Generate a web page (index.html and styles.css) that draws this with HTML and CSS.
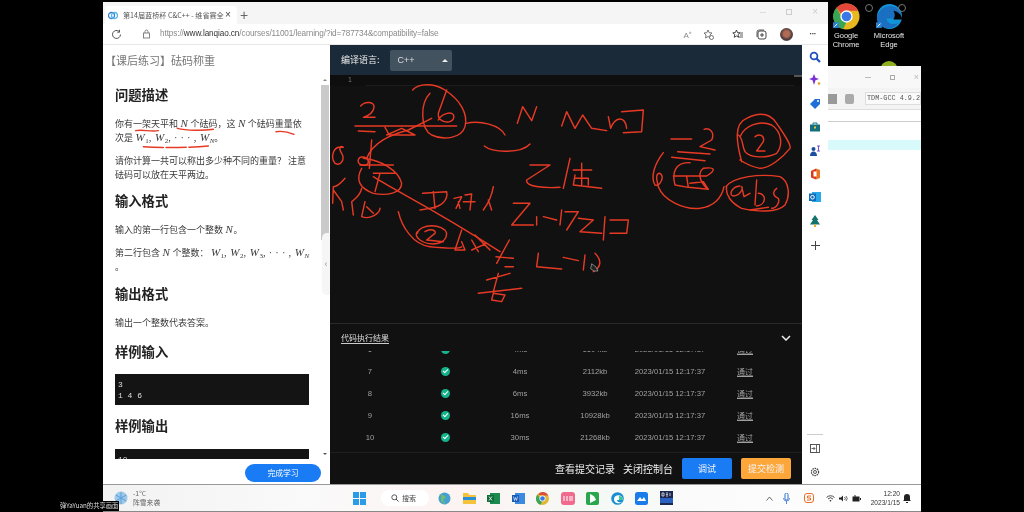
FILE: index.html
```html
<!DOCTYPE html>
<html lang="zh">
<head>
<meta charset="utf-8">
<title>砝码称重</title>
<link rel="stylesheet" href="styles.css">
</head>
<body>
<div class="desktop">
  <div class="desk-icon chrome-desk">
    <svg width="27" height="27" viewBox="0 0 28 28"><circle cx="14" cy="14" r="13.5" fill="#e8b820"/><path d="M14 .5A13.5 13.5 0 0 1 26 8H14a6 6 0 0 0-5.5 3.5L3.5 5A13.5 13.5 0 0 1 14 .5z" fill="#e2473a"/><path d="M3.5 5l5.5 9.5a6 6 0 0 0 5 5.5l-3.5 7A13.5 13.5 0 0 1 3.5 5z" fill="#3aa655"/><circle cx="14" cy="14" r="6.4" fill="#fff"/><circle cx="14" cy="14" r="5" fill="#3b78e7"/><rect x="0" y="20" width="6" height="6" fill="#2c7fd0"/><path d="M1.5 24.500l3-3" stroke="#fff"/></svg>
    <span>Google<br>Chrome</span>
  </div>
  <div class="desk-icon edge-desk">
    <svg width="27" height="27" viewBox="0 0 28 28"><circle cx="14" cy="14" r="13" fill="#1295d8"/><path d="M1 15C3 6 12 1 19 4c5 2 8 7 8 12H11c0 5 6 7 12 5-3 4-8 6-12 5C5 25 0 20 1 15z" fill="#1a6fc0"/><path d="M18 8c5 1 9 4 9 9h-9c2-3 2-6 0-9z" fill="#000"/><rect x="0" y="20" width="6" height="6" fill="#2c7fd0"/><path d="M1.500 24.500l3-3" stroke="#fff"/></svg>
    <span>Microsoft<br>Edge</span>
  </div>
  <i class="desk-ring ring-a"></i>
  <i class="desk-ring ring-b"></i>
  <div class="green-peek"></div>

  <section class="devcpp">
    <div class="dev-title"><i class="wc-min"></i><i class="wc-max"></i><i class="wc-close">×</i></div>
    <div class="dev-tools">
      <b class="tool-a"></b><b class="tool-b"></b><span class="compiler">TDM-GCC 4.9.2</span>
    </div>
    <div class="dev-tabs"></div>
    <div class="dev-sheet"><div class="dev-active"></div></div>
  </section>

  <main class="browser">
    <header class="tabstrip">
      <div class="tab">
        <svg class="tab-logo" width="10" height="9" viewBox="0 0 10 9"><circle cx="3.500" cy="4.500" r="3" fill="none" stroke="#2f7fd8" stroke-width="1.300"/><circle cx="6.500" cy="4.500" r="3" fill="none" stroke="#58b5e8" stroke-width="1.300"/></svg>
        <span class="tab-title">第14届蓝桥杯 C&amp;C++ - 维省赛全</span>
        <span class="tab-x">×</span>
      </div>
      <span class="tab-plus">+</span>
      <div class="window-btns">
        <i class="wb-min"></i><i class="wb-max"></i><i class="wb-close">×</i>
      </div>
    </header>
    <nav class="addressbar">
      <svg class="reload" width="11" height="11" viewBox="0 0 11 11"><path d="M9.500 5.500a4 4 0 1 1-1.200-2.900" fill="none" stroke="#555" stroke-width="1"/><path d="M8.500 .8v2.400H6.200" fill="none" stroke="#555" stroke-width="1"/></svg>
      <svg class="lock" width="9" height="10" viewBox="0 0 9 10"><rect x="1.500" y="4" width="6" height="5" fill="none" stroke="#777" stroke-width=".9"/><path d="M3 4V2.500a1.500 1.500 0 0 1 3 0V4" fill="none" stroke="#777" stroke-width=".9"/></svg>
      <span class="url">https://<em>www.lanqiao.cn</em>/courses/11001/learning/?id=787734&amp;compatibility=false</span>
      <div class="toolbar-icons">
        <span class="ti-read">A<sup>»</sup></span>
        <svg class="ti-star" width="11" height="11" viewBox="0 0 11 11"><path d="M5 1l1.200 2.700 2.800.3-2.100 2 .6 2.900L5 7.500 2.500 9l.6-2.900L1 4l2.800-.3z" fill="none" stroke="#666" stroke-width=".9"/><circle cx="8.500" cy="8.500" r="2" fill="#fff" stroke="#555" stroke-width=".8"/></svg>
        <svg class="ti-fav" width="11" height="11" viewBox="0 0 11 11"><path d="M4.500 1l1 2.600 2.500.2-2 1.800.6 2.700L4.500 7 2.200 8.300l.6-2.700-2-1.800 2.500-.2z" fill="none" stroke="#333" stroke-width=".9"/><path d="M8 4h3M8 6h3M7 8h4" stroke="#333" stroke-width=".8"/></svg>
        <svg class="ti-coll" width="11" height="11" viewBox="0 0 11 11"><rect x="2" y="2" width="8" height="8" rx="2" fill="none" stroke="#333" stroke-width=".9"/><path d="M6 4v4M4 6h4" stroke="#333" stroke-width=".9"/><path d="M1 8V3a2 2 0 0 1 2-2h5" fill="none" stroke="#333" stroke-width=".8"/></svg>
        <span class="avatar"></span>
        <span class="dots">···</span>
      </div>
    </nav>
    <div class="page">
      <aside class="lesson">
        <h1 class="lesson-title">【课后练习】砝码称重</h1>
        <div class="lesson-scroll">
          <article class="lesson-body">
            <h2>问题描述</h2>
            <p>你有一架天平和 <var>N</var> 个砝码，这 <var>N</var> 个砝码重量依<br>次是 <span class="math"><var>W</var><sub>1</sub>, <var>W</var><sub>2</sub>, · · · , <var>W</var><sub><var>N</var></sub></span>。</p>
            <p>请你计算一共可以称出多少种不同的重量？ 注意<br>砝码可以放在天平两边。</p>
            <h2>输入格式</h2>
            <p>输入的第一行包含一个整数 <var>N</var>。</p>
            <p>第二行包含 <var>N</var> 个整数： <span class="math"><var>W</var><sub>1</sub>, <var>W</var><sub>2</sub>, <var>W</var><sub>3</sub>, · · · , <var>W</var><sub><var>N</var></sub></span><br>。</p>
            <h2>输出格式</h2>
            <p>输出一个整数代表答案。</p>
            <h2 class="h-gap">样例输入</h2>
            <pre>3
1 4 6</pre>
            <h2 class="h-gap-small">样例输出</h2>
            <pre class="pre-cut">10</pre>
          </article>
          <div class="scrollbar"><span class="sb-up"></span><span class="sb-thumb"></span><span class="sb-down"></span></div>
          <div class="collapse-handle">‹</div>
        </div>
        <div class="lesson-foot"><button class="finish">完成学习</button></div>
      </aside>

      <section class="ide">
        <div class="ide-head">
          <span class="lang-label">编译语言:</span>
          <div class="lang-select"><span>C++</span><i></i></div>
        </div>
        <div class="editor">
          <div class="editor-line"><span class="gutter">1</span><span class="active-line"></span><span class="mini-scroll"></span></div>
        </div>
        <div class="results">
          <div class="results-head"><span class="results-tab">代码执行结果</span>
            <svg class="chevron" width="10" height="6" viewBox="0 0 10 6"><path d="M1 1l4 4 4-4" fill="none" stroke="#eee" stroke-width="1.500"/></svg>
          </div>
          <div class="results-table">
            <div class="row cut"><span>6</span><span class="ok"><b></b></span><span>4ms</span><span>1604kb</span><span>2023/01/15 12:17:37</span><u>通过</u></div>
            <div class="row"><span>7</span><span class="ok"><b></b></span><span>4ms</span><span>2112kb</span><span>2023/01/15 12:17:37</span><u>通过</u></div>
            <div class="row"><span>8</span><span class="ok"><b></b></span><span>6ms</span><span>3932kb</span><span>2023/01/15 12:17:37</span><u>通过</u></div>
            <div class="row"><span>9</span><span class="ok"><b></b></span><span>16ms</span><span>10928kb</span><span>2023/01/15 12:17:37</span><u>通过</u></div>
            <div class="row"><span>10</span><span class="ok"><b></b></span><span>30ms</span><span>21268kb</span><span>2023/01/15 12:17:37</span><u>通过</u></div>
          </div>
        </div>
        <footer class="ide-foot">
          <a>查看提交记录</a><a>关闭控制台</a>
          <button class="btn-debug">调试</button><button class="btn-submit">提交检测</button>
        </footer>
      </section>

      <aside class="edge-bar">
        <svg width="12" height="12" viewBox="0 0 12 12"><circle cx="5" cy="5" r="3.400" fill="none" stroke="#2050b8" stroke-width="1.800"/><path d="M7.500 7.500l3.500 3.500" stroke="#2050b8" stroke-width="2.200"/></svg>
        <svg width="12" height="12" viewBox="0 0 12 12"><path d="M5 0l1.500 3.800L10 5 6.500 6.300 5 11 3.500 6.300 0 5l3.500-1.200z" fill="#7a2fd8"/><circle cx="10" cy="9.500" r="1.300" fill="#e8a020"/></svg>
        <svg width="12" height="12" viewBox="0 0 12 12"><path d="M1 6l5-5h5v5l-5 5z" fill="#1f6fd8"/><circle cx="9" cy="3" r="1" fill="#fff"/></svg>
        <svg width="12" height="12" viewBox="0 0 12 12"><rect x="1" y="3.500" width="10" height="7" fill="#14707c"/><path d="M4 3.500V2h4v1.500" fill="none" stroke="#14707c"/><rect x="5" y="5.500" width="2" height="2" fill="#f0c040"/></svg>
        <svg width="12" height="12" viewBox="0 0 12 12"><circle cx="4.500" cy="4" r="2" fill="#1a4fa0"/><path d="M1 11c0-3 1.500-4.500 3.500-4.500S8 8 8 11z" fill="#1a4fa0"/><path d="M8 1h3M9.500 1v5M8 6h3" stroke="#7a4fd8"/></svg>
        <svg width="12" height="12" viewBox="0 0 12 12"><path d="M7 .5L2 3v6.500l5 2z" fill="#d83b1b"/><path d="M7 .5L11 2v8l-4 1.500z" fill="#e8762a"/><rect x="4.500" y="3.500" width="3" height="5" fill="#fff"/></svg>
        <svg width="12" height="12" viewBox="0 0 12 12"><rect x="3" y="1" width="9" height="10" fill="#28a8e8"/><rect x="0" y="2.500" width="7" height="7.500" fill="#0f6cbd"/><circle cx="3.500" cy="6.200" r="1.800" fill="none" stroke="#fff"/></svg>
        <svg width="12" height="12" viewBox="0 0 12 12"><path d="M6 0l3.500 5H8l3 4.500H1L4 5H2.500z" fill="#13736a"/><rect x="5" y="9.500" width="2" height="2.500" fill="#e8b030"/></svg>
        <svg class="edge-plus" width="9" height="9" viewBox="0 0 9 9"><path d="M4.500 0v9M0 4.500h9" stroke="#444" stroke-width="1"/></svg>
        <div class="edge-spacer"></div>
        <div class="edge-rule"></div>
        <svg class="edge-panel" width="10" height="9" viewBox="0 0 10 9"><rect x=".5" y=".5" width="9" height="8" fill="none" stroke="#444" stroke-width=".9"/><path d="M6.500 .5v8M1.500 4.500h3.500M3.500 3l1.500 1.500L3.500 6" fill="none" stroke="#444" stroke-width=".8"/></svg>
        <svg width="10" height="10" viewBox="0 0 10 10"><circle cx="5" cy="5" r="3.600" fill="none" stroke="#444" stroke-width="1.200" stroke-dasharray="1.600 .7"/><circle cx="5" cy="5" r="1.500" fill="none" stroke="#444" stroke-width=".9"/></svg>
      </aside>
    </div>
  </main>

  <svg class="ink" width="1024" height="512" viewBox="0 0 1024 512" fill="none" stroke-linecap="round" stroke-linejoin="round">
    <g transform="translate(100 0) scale(.33333)" class="ink-s">
      <path d="M107 392C130 388 150 396 175 392"/>
      <path d="M232 385C260 392 310 392 340 388"/>
      <path d="M528 395C550 392 570 398 582 403"/>
      <path d="M130 440C200 445 280 442 325 438" stroke-dasharray="60 8"/>
    </g>
    <g transform="translate(330 70) scale(.33333)" class="ink-s">
      <path d="M92 108C105 92 135 95 132 112C130 128 112 138 100 142L135 142"/>
      <path d="M75 168L380 168"/>
      <path d="M85 183L135 185M165 172L178 195L255 195L215 175L170 195"/>
      <path d="M305 145L235 180C180 195 130 215 110 265"/>
      <path d="M248 60C265 40 310 38 345 60C390 90 415 130 405 170C395 205 340 212 305 195C270 175 270 100 300 70"/>
      <path d="M350 60L325 130C320 160 370 165 372 140C370 120 335 130 325 150"/>
      <path d="M408 160C450 150 510 165 525 195"/>
      <path d="M463 228C490 250 575 250 600 222"/>
      <path d="M562 160L578 110L605 152L620 110"/>
      <path d="M40 232C10 225 0 260 15 280C35 290 45 265 35 250C25 235 30 225 40 232"/>
      <path d="M110 265C85 250 75 280 95 285C115 290 120 275 110 265"/>
      <path d="M100 265C150 270 205 300 215 340C215 370 170 378 130 370C90 355 75 330 95 295"/>
      <path d="M90 285L190 285M125 210L118 295M130 310L195 310M150 310L135 365"/>
      <path d="M130 320C200 365 300 410 510 545"/>
      <path d="M10 350C25 350 40 330 45 325M10 350L8 400M10 360L35 395L40 420M95 355C90 380 70 390 65 395L70 435M105 395L95 440C120 450 150 430 150 415M110 410L130 430"/>
      <path d="M278 370L350 365C355 390 335 410 300 415L270 420M310 365L315 415M372 385L395 380L378 415M385 395L390 415M405 375L425 372L420 420M400 395L435 395M490 350C485 380 475 400 460 420M475 390L485 420"/>
      <path d="M205 425C215 470 250 525 300 530C350 535 390 535 395 530"/>
      <path d="M262 490C270 460 340 460 350 490C350 525 300 530 270 510C255 500 258 490 262 485"/>
      <path d="M285 485C300 475 320 480 315 490L290 510L340 515"/>
      <path d="M395 480L375 540L405 540L395 515M425 510L445 545M470 520L425 540M435 495L480 540"/>
      <path d="M538 510L500 580M498 560L550 565M525 590L550 590"/>
      <path d="M445 670L575 655M470 630L540 610M505 610L490 665M490 670L525 675L515 695L485 690L490 670"/>
      <path d="M600 285L660 285L590 330C585 350 640 355 690 352M720 265L700 355M730 300L785 300M755 280L755 345M735 315L730 345L815 355M735 325L775 325L775 345"/>
      <path d="M550 400L600 400L545 465L610 465M620 440L620 465M640 440L680 450M695 420L690 465M705 425L745 425L710 480M745 445L790 450L750 485L815 490M825 440L820 510M840 450L895 450L890 490L840 490"/>
      <path d="M625 550L620 590L695 597M700 562L745 572M765 555L760 600M795 550C815 570 815 590 790 605"/>
    </g>
    <g transform="translate(460 0) scale(.33333)" class="ink-s">
      <path d="M305 378L320 335L345 385L368 345L395 385L440 392M445 350L452 385C465 350 495 345 500 385M485 335L550 330L545 395L490 398"/>
    </g>
    <g transform="translate(600 70) scale(.33333)" class="ink-s">
      <path d="M213 207L275 207"/>
      <path d="M312 178C330 170 345 190 335 210L300 230L345 240"/>
      <path d="M233 245L330 252M215 262L315 272"/>
      <path d="M190 248C165 280 150 320 165 345C180 350 195 320 180 310C165 310 170 330 175 350"/>
      <path d="M175 350C190 390 250 420 300 415C340 410 365 385 372 350"/>
      <path d="M270 278C225 275 215 310 225 345L265 352L325 358L310 335L270 340M220 318L320 318C350 300 345 290 310 295C295 305 295 330 320 355M260 320L265 352"/>
      <path d="M425 275C410 220 400 160 440 145C480 125 510 130 530 160C550 190 575 225 570 235C550 260 510 295 480 295C455 290 435 280 420 270"/>
      <path d="M420 200C435 165 480 150 515 165C545 185 550 225 530 250C500 265 450 265 435 245C425 225 430 205 415 195"/>
      <path d="M465 200C475 190 495 195 490 215L470 243L495 243"/>
      <path d="M378 350C400 320 480 310 540 320C570 335 570 380 555 405C530 430 470 425 425 415C395 400 375 375 380 350"/>
      <path d="M420 348C395 350 385 375 400 378C420 378 430 355 425 350L432 380L450 370"/>
      <path d="M470 330L465 405M475 370C500 370 500 405 470 408"/>
      <path d="M530 355C515 365 520 380 535 385C540 395 530 415 515 415M450 420L505 412"/>
    </g>
    <path d="M592 264l4 3 2 4-4 0-3-2z" fill="#222" stroke="#aaa" stroke-width=".7"/>
  </svg>

  <footer class="taskbar">
    <div class="weather">
      <svg width="14" height="14" viewBox="0 0 14 14"><circle cx="7" cy="7" r="6.500" fill="#9cc8ea"/><path d="M7 1v12M1.800 4l10.400 6M12.200 4L1.800 10" stroke="#5a9ed8"/></svg>
      <div class="weather-text"><span>-1°C</span><span>阵雪来袭</span></div>
    </div>
    <div class="task-center">
      <svg class="winlogo" width="13" height="13" viewBox="0 0 13 13"><path d="M0 0h6v6H0zM7 0h6v6H7zM0 7h6v6H0zM7 7h6v6H7z" fill="#2a9be8"/></svg>
      <div class="search"><svg width="8" height="8" viewBox="0 0 8 8"><circle cx="3.300" cy="3.300" r="2.500" fill="none" stroke="#333" stroke-width=".8"/><path d="M5 5l2.500 2.500" stroke="#333" stroke-width=".9"/></svg><span>搜索</span></div>
      <div class="apps">
        <svg width="13" height="13" viewBox="0 0 13 13"><circle cx="6.500" cy="6.500" r="6" fill="#48a0d0"/><path d="M3 2l5 3-3 3 3 5-5-4z" fill="#6cc070"/></svg>
        <svg width="13" height="13" viewBox="0 0 13 13"><path d="M0 1h5l1.500 2H13v9H0z" fill="#f5c33b"/><rect y="5" width="13" height="3" fill="#2a8fd8"/></svg>
        <svg width="13" height="13" viewBox="0 0 13 13"><rect x="3" y="1" width="10" height="11" fill="#1f8a50"/><rect y="3" width="7" height="7" fill="#116c3a"/><path d="M2 4.500l3 4M5 4.500l-3 4" stroke="#fff" stroke-width=".8"/></svg>
        <svg width="13" height="13" viewBox="0 0 13 13"><rect x="3" y="1" width="10" height="11" fill="#3c8ae0"/><rect y="3" width="7" height="7" fill="#1a5bb8"/><path d="M1.500 4.500l1 4 1-3 1 3 1-4" stroke="#fff" stroke-width=".6" fill="none"/></svg>
        <svg width="13" height="13" viewBox="0 0 13 13"><circle cx="6.500" cy="6.500" r="6.500" fill="#e2b832"/><path d="M6.500 0A6.500 6.500 0 0 1 12.300 3.500H6.500L2 2.500A6.500 6.500 0 0 1 6.500 0z" fill="#dd4b3e"/><path d="M1.500 2.500L6 10l-1.500 2.800A6.500 6.500 0 0 1 1.500 2.500z" fill="#3ba55a"/><circle cx="6.500" cy="6.500" r="3" fill="#fff"/><circle cx="6.500" cy="6.500" r="2.300" fill="#3b78e7"/></svg>
        <svg width="14" height="13" viewBox="0 0 14 13"><rect width="14" height="13" rx="3" fill="#ef6a8c"/><path d="M3 4v5M6 4v5M9 4v5M11 4v5" stroke="#fff" stroke-width="1"/></svg>
        <svg width="13" height="13" viewBox="0 0 13 13"><rect width="13" height="13" rx="2" fill="#2aa64e"/><path d="M4 2v9l6-3c-1-3-3-5-6-6z" fill="#fff"/></svg>
        <svg width="13" height="13" viewBox="0 0 13 13"><circle cx="6.500" cy="6.500" r="6.300" fill="#1a8fd0"/><path d="M3 7c0-3 4-5 7-3 1 1 2 2 2 4H6c0 2 3 3 5 2-2 2-8 2-8-3z" fill="#fff"/><path d="M8 4c2 0 4 1 4 4H8z" fill="#38c898"/></svg>
        <svg width="13" height="13" viewBox="0 0 13 13"><rect width="13" height="13" rx="2.500" fill="#1a7ce8"/><path d="M2 9l3-4 2 2.500L9 5l2 4z" fill="#fff"/></svg>
        <svg width="13" height="14" viewBox="0 0 13 14"><rect width="13" height="14" fill="#1c2a52"/><rect y="7" width="13" height="5" fill="#2a60c0"/><path d="M2 2h2v3H2zM6 2h2M6 3.500h2M6 5h2M10 2v3" stroke="#fff" stroke-width=".7" fill="none"/></svg>
      </div>
    </div>
    <div class="tray">
      <svg width="7" height="5" viewBox="0 0 7 5"><path d="M.5 4.500l3-3.500 3 3.500" fill="none" stroke="#444" stroke-width=".8"/></svg>
      <svg class="tray-mic" width="7" height="11" viewBox="0 0 7 11"><rect x="2" y="0" width="3" height="7" rx="1.500" fill="none" stroke="#2a6fd0"/><path d="M.5 5a3 3 0 0 0 6 0M3.500 8v3" fill="none" stroke="#2a6fd0" stroke-width=".8"/></svg>
      <svg class="tray-s" width="10" height="10" viewBox="0 0 10 10"><rect x=".5" y=".5" width="9" height="9" rx="2.500" fill="none" stroke="#e8702a"/><path d="M7 3H3.500v2h3v2H3" fill="none" stroke="#e8702a"/></svg>
      <svg class="tray-wifi" width="9" height="7" viewBox="0 0 9 7"><path d="M.5 2.500a5.500 5.500 0 0 1 8 0M2 4a3.500 3.500 0 0 1 5 0" fill="none" stroke="#222" stroke-width=".8"/><circle cx="4.500" cy="5.800" r=".8" fill="#222"/></svg>
      <svg class="tray-vol" width="9" height="7" viewBox="0 0 9 7"><path d="M0 2.500h2l2-2v6l-2-2H0z" fill="#222"/><path d="M5.500 2a2 2 0 0 1 0 3M7 1a3.500 3.500 0 0 1 0 5" fill="none" stroke="#222" stroke-width=".7"/></svg>
      <svg class="tray-vol" width="9" height="7" viewBox="0 0 9 7"><rect x=".5" y="1.500" width="7" height="5" fill="#222"/><rect x="8" y="3" width="1" height="2" fill="#222"/><path d="M3 0v2" stroke="#222"/></svg>
      <div class="clock"><span>12:20</span><span>2023/1/15</span></div>
      <svg class="tray-bell" width="8" height="9" viewBox="0 0 8 9"><path d="M4 0a3 3 0 0 1 3 3v3l1 1H0l1-1V3a3 3 0 0 1 3-3zM3 8h2v1H3z" fill="#222"/></svg>
    </div>
  </footer>
  <div class="watermark">弹YaYuan的共享画面</div>
</div>
</body>
</html>
```

FILE: styles.css
```css
* { box-sizing: border-box; }
html, body { margin: 0; width: 1024px; height: 512px; overflow: hidden; background: #000; }
body { font-family: "Noto Sans CJK SC", "Liberation Sans", sans-serif; }
svg { display: block; flex: none; }

.desktop { position: relative; width: 1024px; height: 512px; background: #000; overflow: hidden; filter: blur(.3px); }

/* Desktop icons */
.desk-icon { position: absolute; top: 3px; width: 46px; display: flex; flex-direction: column; align-items: center; color: #e8e8e8; font: 7.500px/9px "Liberation Sans", sans-serif; text-align: center; }
.desk-icon span { margin-top: 1px; }
.chrome-desk { left: 823px; }
.edge-desk { left: 866px; }
.desk-ring { position: absolute; top: 4px; width: 8px; height: 8px; border: 1px solid #777; border-radius: 50%; }
.ring-a { left: 865px; }
.ring-b { left: 898px; }
.green-peek { position: absolute; left: 880px; top: 61px; width: 18px; height: 18px; border-radius: 50%; background: #8fae22; }

/* Background window */
.devcpp { position: absolute; left: 828px; top: 66px; width: 93px; height: 418px; background: #fff; display: flex; flex-direction: column; }
.dev-title { height: 22px; flex: none; background: #f8f8f8; display: flex; align-items: center; justify-content: flex-end; gap: 19px; padding-right: 2px; color: #bbb; }
.dev-title i { display: block; font-style: normal; }
.wc-min { width: 6px; height: 1px; background: #bbb; }
.wc-max { width: 5px; height: 5px; border: 1px solid #aaa; }
.wc-close { font: 9px/9px "Liberation Sans", sans-serif; }
.dev-tools { height: 22px; flex: none; background: #f4f4f4; display: flex; align-items: center; border-bottom: 1px solid #ddd; }
.tool-a { width: 9px; height: 10px; background: #999; }
.tool-b { width: 9px; height: 10px; border-radius: 2px; background: #aaa; margin-left: 8px; }
.compiler { width: 56px; height: 13px; margin-left: 11px; border: 1px solid #ddd; background: #fafafa; color: #555; font: 6.800px/11px "Liberation Mono", monospace; white-space: nowrap; padding-left: 1px; }
.dev-tabs { height: 12px; flex: none; background: #fff; border-bottom: 1px solid #ccc; }
.dev-sheet { flex: 1; background: #fff; padding-top: 18px; }
.dev-active { height: 10px; background: #d9fafb; }

/* Browser */
.browser { position: absolute; left: 103px; top: 2px; width: 725px; height: 482px; background: #fff; display: flex; flex-direction: column; }
.tabstrip { height: 22px; background: #f5f5f5; display: flex; align-items: flex-end; padding-left: 2px; flex: none; }
.tab { width: 132px; height: 18px; background: #fff; border-radius: 4px 4px 0 0; display: flex; align-items: center; padding: 0 6px 0 3px; }
.tab-title { margin-left: 5px; font-size: 7.100px; line-height: 12px; color: #555; white-space: nowrap; width: 97px; }
.tab-x { margin-left: 5px; font: 10px/12px "Liberation Sans", sans-serif; color: #444; }
.tab-plus { margin-left: 3px; width: 12px; height: 18px; font: 14px/18px "Liberation Sans", sans-serif; color: #666; }
.window-btns { margin-left: auto; height: 20px; display: flex; align-items: center; gap: 20px; padding-right: 10px; align-self: flex-start; }
.window-btns i { display: block; font-style: normal; color: #ccc; }
.wb-min { width: 6px; height: 1px; background: #ddd; }
.wb-max { width: 6px; height: 6px; border: 1px solid #ccc; }
.wb-close { font: 10px/10px "Liberation Sans", sans-serif; }
.addressbar { height: 21px; flex: none; background: #fff; display: flex; align-items: center; padding-left: 8px; border-bottom: 1px solid #e8e8e8; }
.lock { margin-left: 20px; }
.url { margin-left: 9px; font: 8.200px/12px "Liberation Sans", sans-serif; color: #8a8a8a; white-space: nowrap; letter-spacing: -.1px; }
.url em { font-style: normal; color: #333; }
.toolbar-icons { margin-left: auto; display: flex; align-items: center; padding-right: 12px; }
.ti-read { font: 8px/10px "Liberation Sans", sans-serif; color: #888; }
.ti-read sup { font-size: 5px; }
.ti-star { margin-left: 11px; }
.ti-fav { margin-left: 18px; }
.ti-coll { margin-left: 13px; }
.avatar { width: 13px; height: 13px; border-radius: 50%; margin-left: 13px; background: radial-gradient(circle at 50% 45%, #b06a55 0 30%, #4a3a3a 60%, #777 100%); }
.dots { margin-left: 17px; font: bold 8px/10px "Liberation Sans", sans-serif; color: #333; letter-spacing: -.5px; }

.page { flex: 1; min-height: 0; display: flex; }

/* Lesson panel */
.lesson { width: 227px; flex: none; background: #fff; display: flex; flex-direction: column; }
.lesson-title { height: 30px; margin: 0; padding-left: 2px; flex: none; font-size: 11px; font-weight: 400; line-height: 30px; color: #777; }
.lesson-scroll { position: relative; height: 384px; flex: none; overflow: hidden; }
.lesson-body { width: 194px; margin-left: 12px; color: #3a3a3a; font-size: 9px; line-height: 13.500px; }
.lesson-body h2 { margin: 12px 0 14px; font-size: 13.300px; font-weight: 700; line-height: 16px; color: #222; }
.lesson-body h2.h-gap { margin-top: 15px; }
.lesson-body h2.h-gap-small { margin-top: 13px; margin-bottom: 15px; }
.lesson-body h2 + p { margin-top: 0; }
.lesson-body p { margin: 0 0 9.500px; white-space: nowrap; }
.lesson-body var { font: italic 11px "Liberation Serif", serif; margin: 0 .5px; }
.math { font: 10.500px "Liberation Serif", serif; word-spacing: .5px; }
.lesson-body sub { font: 7px "Liberation Serif", serif; vertical-align: -2px; line-height: 0; }
.lesson-body sub var { font-size: 7px; margin: 0; }
.lesson-body pre { margin: 0; height: 31px; padding: 5px 3px; background: #141414; color: #ddd; font: 8px/11px "Liberation Mono", monospace; }
.scrollbar { position: absolute; right: 1px; top: 2px; width: 8px; height: 380px; }
.sb-up, .sb-down { position: absolute; left: 2px; width: 0; height: 0; border: 2px solid transparent; }
.sb-up { top: 0; border-bottom-color: #888; }
.sb-down { bottom: 0; border-top-color: #555; }
.sb-thumb { position: absolute; top: 8px; left: 0; width: 8px; height: 155px; background: #cacaca; }
.collapse-handle { position: absolute; right: 0; top: 158px; width: 8px; height: 62px; background: #f6f6f6; border-radius: 5px 0 0 5px; color: #999; font: 9px/62px "Liberation Sans", sans-serif; text-align: center; }
.lesson-foot { flex: 1; min-height: 0; display: flex; align-items: flex-start; justify-content: flex-end; padding: 5px 9px 0 0; }
.finish { width: 76px; height: 18px; border: 0; padding: 0; border-radius: 9px; background: #1a7cf5; color: #fff; font: 7.800px/18px "Noto Sans CJK SC", sans-serif; }

/* IDE */
.ide { width: 472px; flex: none; background: #111; display: flex; flex-direction: column; color: #ddd; }
.ide-head { height: 30px; flex: none; background: #1b2a38; display: flex; align-items: center; padding-left: 11px; }
.lang-label { font-size: 9px; line-height: 12px; color: #eee; }
.lang-select { margin-left: 10px; width: 62px; height: 21px; border-radius: 2px; background: #43525f; display: flex; align-items: center; justify-content: space-between; padding: 0 4px 0 8px; font: 9px/12px "Liberation Sans", sans-serif; color: #ddd; }
.lang-select i { width: 0; height: 0; border: 3px solid transparent; border-top: 0; border-bottom: 3px solid #eee; }
.editor { flex: 1; min-height: 0; background: #111; }
.editor-line { height: 11px; display: flex; background: #0e0e0e; }
.gutter { width: 36px; flex: none; padding-left: 18px; font: 7px/10px "Liberation Sans", sans-serif; color: #777; }
.active-line { flex: 1; border-bottom: 1px solid #1c1c1c; }
.mini-scroll { width: 8px; height: 2px; background: #555; }
.results { height: 130px; flex: none; border-top: 1px solid #2a2a2a; display: flex; flex-direction: column; }
.results-head { height: 27px; flex: none; display: flex; align-items: center; justify-content: space-between; padding: 0 11px; background: #111; }
.results-tab { font-size: 8px; line-height: 11px; color: #ddd; border-bottom: 1px solid #ccc; }
.results-table { flex: 1; min-height: 0; overflow: hidden; border-bottom: 1px solid #1f1f1f; }
.row { height: 22px; display: grid; grid-template-columns: 80px 70px 80px 70px 80px 70px; align-items: center; justify-items: center; font: 7.700px/11px "Liberation Sans", sans-serif; color: #a0a0a0; white-space: nowrap; }
.row u { font: 8px/11px "Noto Sans CJK SC", sans-serif; }
.cut { margin-top: -13px; }
.ok b { display: block; width: 9px; height: 9px; border-radius: 50%; background: #14b38b; position: relative; }
.ok b::after { content: ""; position: absolute; left: 2.500px; top: 2px; width: 4px; height: 2px; border-left: 1px solid #fff; border-bottom: 1px solid #fff; transform: rotate(-45deg); }
.ide-foot { height: 31px; flex: none; display: flex; align-items: center; justify-content: flex-end; padding-right: 11px; }
.ide-foot a { font-size: 10px; line-height: 14px; color: #eee; margin-right: 8px; }
.ide-foot a:nth-child(2) { margin-right: 9px; }
.ide-foot button { width: 50px; height: 21px; border: 0; padding: 0; border-radius: 2px; color: #f4f4f4; font: 9px/21px "Noto Sans CJK SC", sans-serif; }
.btn-debug { background: #1a7cf5; margin-right: 9px; }
.btn-submit { background: #fda63a; }

/* Edge sidebar */
.edge-bar { width: 26px; flex: none; background: #fff; display: flex; flex-direction: column; align-items: center; gap: 11.400px; padding: 6px 0 7px; }
.edge-plus { margin-top: 3px; }
.edge-spacer { flex: 1; }
.edge-rule { width: 16px; height: 1px; background: #ccc; margin-bottom: -3px; }
.edge-panel { margin-bottom: 3px; }

/* Ink */
.ink { position: absolute; left: 0; top: 0; pointer-events: none; }
.ink-s { stroke: #e73a25; stroke-width: 4.300; }

/* Taskbar */
.taskbar { position: absolute; left: 103px; top: 484px; width: 818px; height: 28px; display: flex; align-items: center; background: linear-gradient(90deg, #f2f2f2 0, #fafafa 25%, #fdf3f3 42%, #f5f9f5 60%, #fbfbfb 75%, #fff 100%); border-top: 1px solid #999; border-bottom: 1px solid #888; }
.weather { width: 239px; flex: none; display: flex; align-items: center; gap: 5px; padding-left: 11px; }
.weather-text { display: flex; flex-direction: column; font-size: 6.800px; line-height: 9px; color: #666; }
.task-center { width: 340px; flex: none; display: flex; align-items: center; }
.winlogo { margin-left: 11px; }
.search { width: 48px; height: 16px; margin-left: 7px; border-radius: 8px; background: #fff; display: flex; align-items: center; gap: 3px; padding-left: 10px; margin-left: 15px; font-size: 7px; line-height: 9px; color: #444; }
.apps { display: flex; align-items: center; gap: 11.500px; margin-left: 9px; }
.tray { flex: 1; display: flex; align-items: center; padding-left: 84px; }
.tray-mic { margin-left: 10px; }
.tray-s { margin-left: 14px; }
.tray-wifi { margin-left: 12px; }
.tray-vol { margin-left: 4px; }
.clock { display: flex; flex-direction: column; align-items: flex-end; width: 30px; margin-left: 9px; font: 6.600px/9px "Liberation Sans", sans-serif; color: #333; white-space: nowrap; }
.tray-bell { margin-left: 3px; }
.watermark { position: absolute; left: 60px; top: 501px; font-size: 6.300px; line-height: 10px; color: #ddd; background: #000; padding-right: 1px; white-space: nowrap; }
```
